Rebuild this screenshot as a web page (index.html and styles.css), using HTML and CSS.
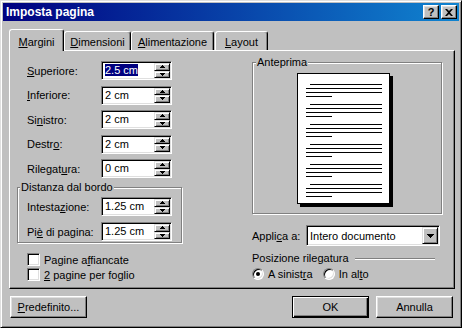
FILE: index.html
```html
<!DOCTYPE html>
<html lang="it">
<head>
    <meta charset="UTF-8">
    <title>Imposta pagina</title>
    <link rel="stylesheet" href="styles.css">
</head>
<body>
<svg width="0" height="0" class="defs">
    <defs>
        <symbol id="up" viewBox="0 0 5 3"><path d="M2 0H3V1H4V2H5V3H0V2H1V1H2Z"/></symbol>
        <symbol id="down" viewBox="0 0 5 3"><path d="M0 0H5V1H4V2H3V3H2V2H1V1H0Z"/></symbol>
        <symbol id="para" viewBox="0 0 91 13">
            <rect x="12" y="0" width="72" height="1"/>
            <rect x="8" y="4" width="76" height="1"/>
            <rect x="8" y="8" width="76" height="1"/>
            <rect x="8" y="12" width="26" height="1"/>
        </symbol>
    </defs>
</svg>

<div class="window">
    <div class="titlebar">
        <span class="title">Imposta pagina</span>
        <div class="caption-btns">
            <span class="cap-btn">?</span>
            <span class="cap-btn">
                <svg width="8" height="7" viewBox="0 0 8 7"><path d="M0 0H2L4 2L6 0H8L5 3.5L8 7H6L4 5L2 7H0L3 3.5Z"/></svg>
            </span>
        </div>
    </div>

    <div class="content">
        <div class="tabs">
            <div class="tab active tab-margini"><u>M</u>argini</div>
            <div class="tab tab-dim"><u>D</u>imensioni</div>
            <div class="tab tab-alim"><u>A</u>limentazione</div>
            <div class="tab tab-layout"><u>L</u>ayout</div>
        </div>

        <div class="panel">
            <div class="col-left">
                <div class="fields">
                    <div class="field">
                        <label><u>S</u>uperiore:</label>
                        <div class="spin"><span class="val"><span class="sel">2.5 cm</span></span>
                            <div class="arrows"><span class="arr"><svg><use href="#up"/></svg></span><span class="arr"><svg><use href="#down"/></svg></span></div>
                        </div>
                    </div>
                    <div class="field">
                        <label><u>I</u>nferiore:</label>
                        <div class="spin"><span class="val">2 cm</span>
                            <div class="arrows"><span class="arr"><svg><use href="#up"/></svg></span><span class="arr"><svg><use href="#down"/></svg></span></div>
                        </div>
                    </div>
                    <div class="field">
                        <label>Si<u>n</u>istro:</label>
                        <div class="spin"><span class="val">2 cm</span>
                            <div class="arrows"><span class="arr"><svg><use href="#up"/></svg></span><span class="arr"><svg><use href="#down"/></svg></span></div>
                        </div>
                    </div>
                    <div class="field">
                        <label>Destr<u>o</u>:</label>
                        <div class="spin"><span class="val">2 cm</span>
                            <div class="arrows"><span class="arr"><svg><use href="#up"/></svg></span><span class="arr"><svg><use href="#down"/></svg></span></div>
                        </div>
                    </div>
                    <div class="field">
                        <label>Rilegat<u>u</u>ra:</label>
                        <div class="spin"><span class="val">0 cm</span>
                            <div class="arrows"><span class="arr"><svg><use href="#up"/></svg></span><span class="arr"><svg><use href="#down"/></svg></span></div>
                        </div>
                    </div>
                </div>

                <fieldset class="group group-border">
                    <legend>Distanza dal bordo</legend>
                    <div class="group-body border-body">
                        <div class="field">
                            <label>Intesta<u>z</u>ione:</label>
                            <div class="spin"><span class="val">1.25 cm</span>
                                <div class="arrows"><span class="arr"><svg><use href="#up"/></svg></span><span class="arr"><svg><use href="#down"/></svg></span></div>
                            </div>
                        </div>
                        <div class="field">
                            <label>Pi<u>è</u> di pagina:</label>
                            <div class="spin"><span class="val">1.25 cm</span>
                                <div class="arrows"><span class="arr"><svg><use href="#up"/></svg></span><span class="arr"><svg><use href="#down"/></svg></span></div>
                            </div>
                        </div>
                    </div>
                </fieldset>

                <div class="checks">
                    <div class="check-row"><span class="checkbox"></span><span>Pagine a<u>f</u>fiancate</span></div>
                    <div class="check-row"><span class="checkbox"></span><span><u>2</u> pagine per foglio</span></div>
                </div>
            </div>

            <div class="col-right">
                <fieldset class="group group-preview">
                    <legend>Anteprima</legend>
                    <div class="group-body preview-body">
                        <div class="page">
                            <svg width="91" height="129" viewBox="0 0 91 129">
                                <use href="#para" x="0" y="10" width="91" height="13"/>
                                <use href="#para" x="0" y="30" width="91" height="13"/>
                                <use href="#para" x="0" y="50" width="91" height="13"/>
                                <use href="#para" x="0" y="70" width="91" height="13"/>
                                <use href="#para" x="0" y="90" width="91" height="13"/>
                                <use href="#para" x="0" y="110" width="91" height="13"/>
                            </svg>
                        </div>
                    </div>
                </fieldset>

                <div class="apply-row">
                    <label>Appli<u>c</u>a a:</label>
                    <div class="combo">
                        <span class="combo-text">Intero documento</span>
                        <span class="drop"><svg width="7" height="4" viewBox="0 0 7 4"><path d="M0 0H7V1H6V2H5V3H4V4H3V3H2V2H1V1H0Z"/></svg></span>
                    </div>
                </div>

                <div class="gutter-head">
                    <span>Posizione rilegatura</span>
                    <span class="etch"></span>
                </div>
                <div class="radio-row">
                    <span class="radio checked"></span><span class="radio-label">A sinist<u>r</u>a</span>
                    <span class="radio"></span><span class="radio-label">In al<u>t</u>o</span>
                </div>
            </div>
        </div>

        <div class="footer">
            <button class="btn"><u>P</u>redefinito...</button>
            <button class="btn default">OK</button>
            <button class="btn">Annulla</button>
        </div>
    </div>
</div>
</body>
</html>
```

FILE: styles.css
```css
* {
    box-sizing: border-box;
}
body {
    margin: 0;
    font-family: "Liberation Sans", Arial, sans-serif;
    font-size: 11px;
    color: #000;
    background: #c0c0c0;
}
u {
    text-decoration: underline;
    text-underline-offset: 1px;
}
.defs {
    position: absolute;
}
.window {
    width: 462px;
    height: 328px;
    background: #c0c0c0;
    border: 1px solid;
    border-color: #dfdfdf #000 #000 #dfdfdf;
    box-shadow: inset 1px 1px #fff, inset -1px -1px #808080;
    padding: 2px;
}

/* title bar */
.titlebar {
    height: 18px;
    background: linear-gradient(to right, #000080, #1084d0);
    display: flex;
    align-items: center;
    padding: 0 2px 0 3px;
}
.title {
    flex: 1;
    color: #fff;
    font-weight: bold;
    font-size: 12px;
}
.caption-btns {
    display: flex;
    gap: 2px;
}
.cap-btn {
    width: 16px;
    height: 14px;
    display: flex;
    align-items: center;
    justify-content: center;
    background: #c0c0c0;
    border: 1px solid;
    border-color: #fff #000 #000 #fff;
    box-shadow: inset -1px -1px #808080, inset 1px 1px #dfdfdf;
    font-weight: bold;
    font-size: 11px;
    line-height: 12px;
}

/* tabs */
.content {
    padding: 8px 4px 0 6px;
}
.tabs {
    display: flex;
    align-items: flex-end;
    height: 21px;
    position: relative;
    z-index: 1;
}
.tab {
    height: 19px;
    border: 1px solid;
    border-bottom: 0;
    border-color: #fff #000 #000 #fff;
    border-radius: 3px 3px 0 0;
    box-shadow: inset -1px 0 #808080;
    background: #c0c0c0;
    text-align: center;
    padding-top: 4px;
}
.tab.active {
    height: 22px;
    margin-bottom: -1px;
    padding-top: 6px;
}
.tab-margini { width: 55px; }
.tab-dim { width: 67px; }
.tab-alim { width: 83px; }
.tab-layout { width: 53px; margin-left: 1px; }

/* panel */
.panel {
    height: 239px;
    border: 1px solid;
    border-color: #fff #000 #000 #fff;
    box-shadow: inset -1px -1px #808080;
    display: grid;
    grid-template-columns: 165px 190px;
    column-gap: 70px;
    padding: 0 0 0 7px;
}
.col-left {
    padding-top: 10px;
}
.fields {
    display: flex;
    flex-direction: column;
    gap: 5.5px;
    padding-left: 10px;
}
.field {
    display: flex;
    align-items: center;
    height: 19px;
}
.field label {
    width: 74px;
}
.spin {
    width: 71px;
    height: 19px;
    display: flex;
    background: #fff;
    border: 1px solid;
    border-color: #808080 #fff #fff #808080;
    box-shadow: inset 1px 1px #000, inset -1px -1px #dfdfdf;
    padding: 1px;
}
.val {
    flex: 1;
    padding-left: 2px;
    line-height: 15px;
}
.sel {
    background: #000080;
    color: #fff;
}
.arrows {
    width: 16px;
    display: flex;
    flex-direction: column;
}
.arr {
    flex: 1;
    display: flex;
    align-items: center;
    justify-content: center;
    background: #c0c0c0;
    border: 1px solid;
    border-color: #dfdfdf #000 #000 #dfdfdf;
    box-shadow: inset 1px 1px #fff, inset -1px -1px #808080;
}
.arr svg {
    width: 5px;
    height: 3px;
    shape-rendering: crispEdges;
}

/* group boxes */
.group {
    margin: 0;
    padding: 0;
    border: 1px solid #808080;
    box-shadow: 1px 1px 0 #fff, inset 1px 1px 0 #fff;
}
.group legend {
    padding: 0 1px;
    margin-left: 2px;
    line-height: 13px;
    background: #c0c0c0;
}
.group-border {
    margin-top: 3px;
}
.border-body {
    padding: 3px 0 1px 9px;
    display: flex;
    flex-direction: column;
    gap: 6px;
}
.checks {
    margin-top: 9px;
    padding-left: 10px;
}
.check-row {
    display: flex;
    align-items: center;
    height: 15px;
    gap: 4px;
}
.checkbox {
    width: 13px;
    height: 13px;
    background: #fff;
    border: 1px solid;
    border-color: #808080 #fff #fff #808080;
    box-shadow: inset 1px 1px #000, inset -1px -1px #dfdfdf;
}

/* right column */
.col-right {
    padding-top: 5px;
}
.group-preview {
    width: 190px;
}
.group-preview legend {
    margin-left: 3px;
}
.preview-body {
    padding: 4px 0 9px 44px;
}
.page {
    width: 93px;
    height: 131px;
    background: #fff;
    border: 1px solid #000;
    box-shadow: 3px 3px 0 #000;
}
.page svg {
    display: block;
    shape-rendering: crispEdges;
}
.apply-row {
    display: flex;
    align-items: center;
    margin-top: 11px;
}
.apply-row label {
    width: 54px;
}
.combo {
    width: 134px;
    height: 21px;
    display: flex;
    align-items: center;
    background: #fff;
    border: 1px solid;
    border-color: #808080 #fff #fff #808080;
    box-shadow: inset 1px 1px #000, inset -1px -1px #dfdfdf;
    padding: 1px;
}
.combo-text {
    flex: 1;
    padding-left: 2px;
}
.drop {
    width: 16px;
    height: 17px;
    display: flex;
    align-items: center;
    justify-content: center;
    background: #c0c0c0;
    border: 1px solid;
    border-color: #dfdfdf #000 #000 #dfdfdf;
    box-shadow: inset 1px 1px #fff, inset -1px -1px #808080;
}
.drop svg {
    shape-rendering: crispEdges;
}
.gutter-head {
    display: flex;
    align-items: center;
    margin-top: 6px;
    line-height: 13px;
}
.etch {
    flex: 1;
    margin: 0 7px 0 6px;
    border-top: 1px solid #808080;
    border-bottom: 1px solid #fff;
}
.radio-row {
    display: flex;
    align-items: center;
    margin-top: 2px;
    height: 13px;
}
.radio {
    width: 12px;
    height: 12px;
    border-radius: 50%;
    background: #fff;
    border: 1px solid;
    border-color: #808080 #fff #fff #808080;
    box-shadow: inset 1px 1px #000, inset -1px -1px #dfdfdf;
    display: flex;
    align-items: center;
    justify-content: center;
}
.radio.checked::after {
    content: "";
    width: 4px;
    height: 4px;
    border-radius: 50%;
    background: #000;
}
.radio-label {
    margin: 0 10px 0 4px;
}

/* footer buttons */
.footer {
    display: flex;
    gap: 7px;
    margin-top: 7px;
    padding: 0 2px 0 1px;
}
.btn {
    width: 77px;
    height: 22px;
    padding: 0;
    font-family: inherit;
    font-size: 11px;
    color: #000;
    background: #c0c0c0;
    border: 1px solid;
    border-color: #fff #000 #000 #fff;
    box-shadow: inset -1px -1px #808080, inset 1px 1px #dfdfdf;
}
.btn:first-child {
    margin-right: auto;
}
.btn.default {
    border-color: #000;
    box-shadow: inset 1px 1px #fff, inset -1px -1px #000, inset -2px -2px #808080;
}
```
